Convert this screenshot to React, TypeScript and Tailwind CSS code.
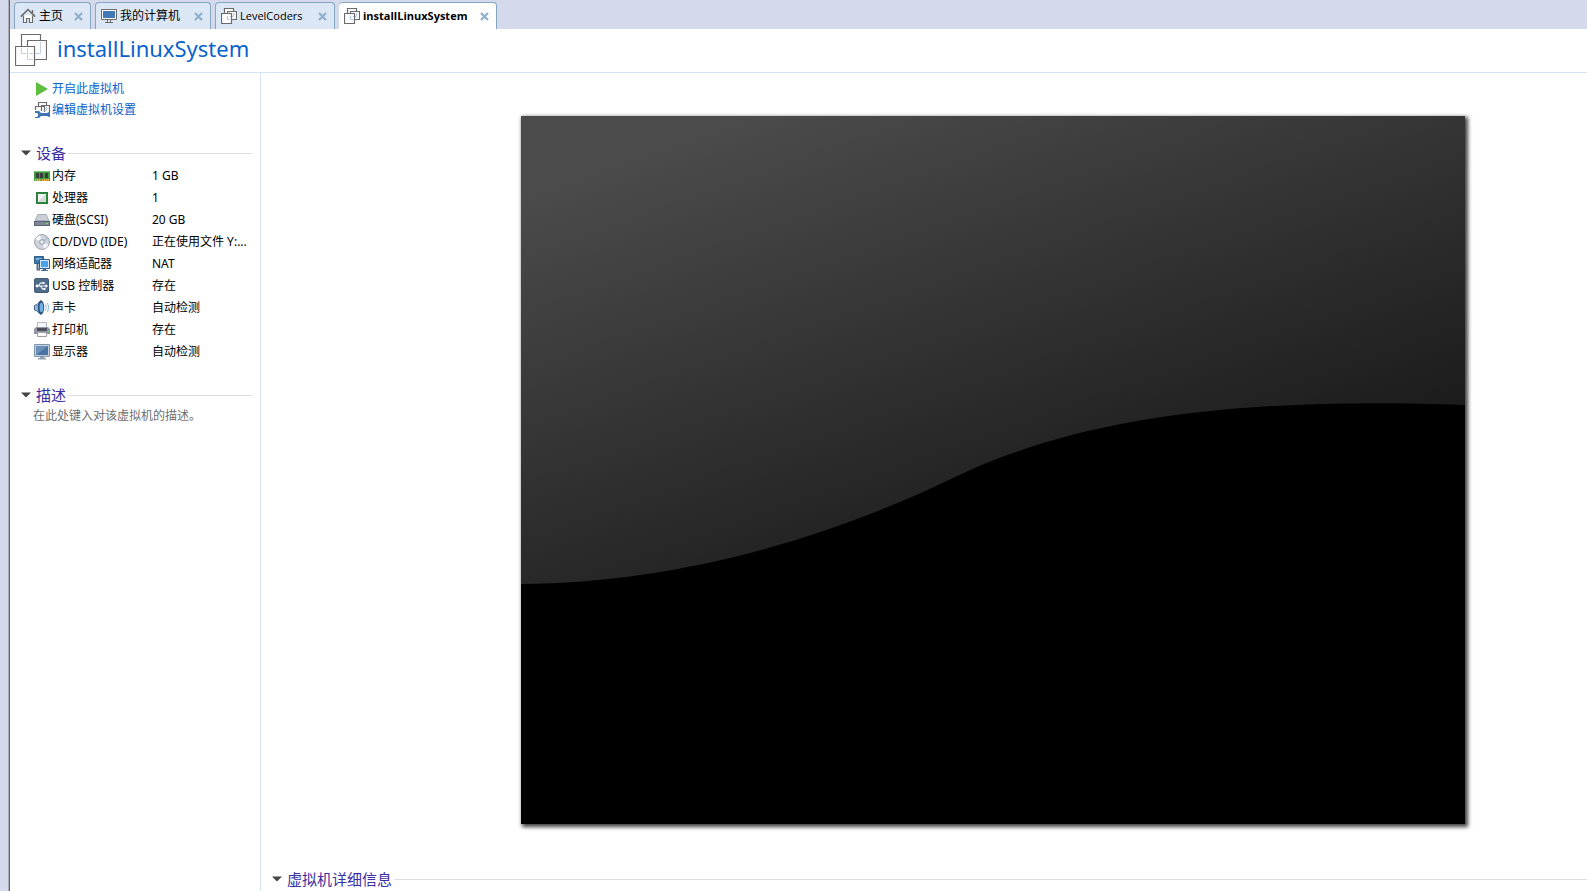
import { useState, type ReactNode } from 'react'

function HomeIcon() {
  return (
    <svg width="16" height="16" viewBox="0 0 16 16" className="shrink-0" aria-hidden="true">
      <path
        d="M3.5 7.5V14.5H6.5V10.5H9.5V14.5H12.5V7.5"
        fill="#fff"
        stroke="#6b6b6b"
        strokeWidth="1.2"
      />
      <path d="M.8 8.6 8 1.5l7.2 7.1" fill="none" stroke="#6b6b6b" strokeWidth="1.6" />
      <path d="M12.5 2v3.5" stroke="#6b6b6b" strokeWidth="1.4" />
    </svg>
  )
}

function ComputerIcon() {
  return (
    <svg width="16" height="16" viewBox="0 0 16 16" className="shrink-0" aria-hidden="true">
      <path d="M.5 1.5h15v10H.5z" fill="#fff" stroke="#6b6b6b" />
      <path d="M2 3h12v7H2z" fill="#4178b5" />
      <path d="M6.5 12v2.5M9.5 12v2.5M4 14.5h8" stroke="#6b6b6b" fill="none" />
    </svg>
  )
}

function VmIcon() {
  return (
    <svg width="16" height="16" viewBox="0 0 16 16" className="shrink-0" aria-hidden="true">
      <path d="M3.5.5h9v3h3v8h-5v4h-10v-9h3z" fill="#fff" />
      <path d="M6.5 8v3.5H9M9 8.5h3.5V5" stroke="#b9c8e4" fill="none" />
      <path
        d="M3.5 5V.5h9V3M6.5 5V3.5h9v8H11M.5 5.5h10v10H.5z"
        stroke="#6b6b6b"
        strokeWidth="1.2"
        fill="none"
      />
    </svg>
  )
}

function VmLargeIcon() {
  return (
    <svg width="32" height="32" viewBox="0 0 32 32" className="shrink-0" aria-hidden="true">
      <path
        d="M6.5 12V.5h19v6M12.5 12V6.5h19v19H20M.5 12.5h19v19H.5z"
        stroke="#6b6b6b"
        strokeWidth="1.2"
        fill="none"
      />
      <path
        d="M6.5 14v5.5h5M12.5 14v11.5H18M20 19.5h5.5V8M14 19.5h4"
        stroke="#c3d0e8"
        fill="none"
      />
    </svg>
  )
}

function PlayIcon() {
  return (
    <svg width="16" height="16" viewBox="0 0 16 16" className="shrink-0" aria-hidden="true">
      <path d="M2 1v14l12-7z" fill="#5fbe3f" />
    </svg>
  )
}

function SettingsIcon() {
  return (
    <svg width="16" height="16" viewBox="0 0 16 16" className="shrink-0" aria-hidden="true">
      <path
        d="M4.5 4V.5h8V3M7.5 9V3.5h8v8M1.5 8V4.5h9V10"
        stroke="#6b6b6b"
        strokeWidth="1.2"
        fill="none"
      />
      <path d="M9 8.5h3.5V5" stroke="#b9c8e4" fill="none" />
      <path
        d="M1 9h4l2 2h6l2-1h1v5h-1l-2-1H7l-2 2H1v-1h2l1-1v-2l-1-1H1z"
        fill="#3f76b4"
      />
    </svg>
  )
}

function MemoryIcon() {
  return (
    <svg width="16" height="16" viewBox="0 0 16 16" className="shrink-0" aria-hidden="true">
      <path d="M0 3h16v10H0z" fill="#3c9a3f" />
      <path d="M0 3h16v1H0z" fill="#7cc47a" />
      <path d="M2 5h3v5H2zM6 5h3v5H6zM11 5h3v5h-3z" fill="#3b3b3b" />
      <path d="M1 12h6M8 12h7" stroke="#e8b04a" strokeWidth="2" strokeDasharray="1.5 .5" />
    </svg>
  )
}

function CpuIcon() {
  return (
    <svg width="16" height="16" viewBox="0 0 16 16" className="shrink-0" aria-hidden="true">
      <path d="M2 2h12v12H2z" fill="#27903f" />
      <path d="M2.5 2.5h11v11h-11z" fill="none" stroke="#2e7a40" />
      <path d="M4 4h8v8H4z" fill="#d5dad7" />
      <path d="M4 4h8L4 12z" fill="#f3f5f3" />
    </svg>
  )
}

function DiskIcon() {
  return (
    <svg width="16" height="16" viewBox="0 0 16 16" className="shrink-0" aria-hidden="true">
      <path d="M3.5 2h9L16 10H0z" fill="#a9b0bc" />
      <path d="M4 3h8l2 5H2z" fill="#c9ced7" />
      <path d="M0 9h16v5H0z" fill="#5b6575" />
      <path d="M1 10h14v3H1z" fill="#7d8796" />
      <path d="M12 11h2v1h-2z" fill="#7ed957" />
    </svg>
  )
}

function DiscIcon() {
  return (
    <svg width="16" height="16" viewBox="0 0 16 16" className="shrink-0" aria-hidden="true">
      <circle cx="8" cy="8" r="7.4" fill="#d0d5dd" stroke="#969eab" strokeWidth="1" />
      <path d="M8 8 1.5 5A7 7 0 0 1 6 1.200zM8 8l6.5 3a7 7 0 0 1-4.5 3.800z" fill="#f6f8fa" />
      <path d="M8 8 12 2.200A7 7 0 0 1 14.800 6z" fill="#bcc4cf" />
      <circle cx="8" cy="8" r="2.6" fill="#c4ccd8" stroke="#98a3b3" strokeWidth=".8" />
      <circle cx="8" cy="8" r="1.1" fill="#fff" />
    </svg>
  )
}

function NetworkIcon() {
  return (
    <svg width="16" height="16" viewBox="0 0 16 16" className="shrink-0" aria-hidden="true">
      <path d="M.5.5h9v7h-9z" fill="#3f78ad" stroke="#2f5d8c" />
      <path d="M2 2h6v2H2z" fill="#7fb1dc" />
      <path d="M3.5 8v5.500H6" stroke="#5b6f86" strokeWidth="2" fill="none" />
      <path d="M5.5 3.5h10v9h-10z" fill="#d9e8f5" stroke="#2f5d8c" />
      <path d="M7 5h7v6H7z" fill="#48a4ea" />
      <path d="M9 13h3v1h2v1H7v-1h2z" fill="#486c92" />
    </svg>
  )
}

function UsbIcon() {
  return (
    <svg width="16" height="16" viewBox="0 0 16 16" className="shrink-0" aria-hidden="true">
      <rect x=".5" y=".5" width="14" height="14" rx="1.5" fill="#4f6b88" stroke="#405a77" />
      <path
        d="M2 8h10M4.500 8l2-3H9M6.500 8l2 3H10"
        stroke="#fff"
        strokeWidth="1.1"
        fill="none"
      />
      <circle cx="3" cy="8" r="1.4" fill="#fff" />
      <path d="m11.500 6 2.500 2-2.500 2zM8.500 4h2v2h-2zM9.500 10h2v2h-2z" fill="#fff" />
    </svg>
  )
}

function SoundIcon() {
  return (
    <svg width="16" height="16" viewBox="0 0 16 16" className="shrink-0" aria-hidden="true">
      <path d="M.5 5.500 3 4.500 7 .5v14L3 11l-2.500-1z" fill="#9bb9d8" stroke="#41658e" />
      <ellipse cx="7" cy="7.5" rx="3.2" ry="7" fill="#2a5585" />
      <ellipse cx="7.4" cy="7.5" rx="1.8" ry="4.8" fill="#6fb0e6" />
      <path d="M11.500 4.500q1.800 3 0 6M13.500 3q2.400 4.500 0 9" stroke="#8fb4d8" fill="none" />
    </svg>
  )
}

function PrinterIcon() {
  return (
    <svg width="16" height="16" viewBox="0 0 16 16" className="shrink-0" aria-hidden="true">
      <path d="M3.500.5h9v6h-9z" fill="#f5f6f8" stroke="#b4b9c1" />
      <path d="M2 5h12l2 2v5H0V7z" fill="#9297a4" />
      <path d="M3 6h10v3H3z" fill="#4b505c" />
      <path d="M13 9h2v1h-2z" fill="#6fd24d" />
      <path d="M3.500 10.500h9v4h-9z" fill="#fafafa" stroke="#9a9fa9" />
    </svg>
  )
}

function DisplayIcon() {
  return (
    <svg width="16" height="16" viewBox="0 0 16 16" className="shrink-0" aria-hidden="true">
      <path d="M.5.5h15v12H.5z" fill="#c3cfdd" stroke="#8295ab" />
      <path d="M2 2h12v9H2z" fill="#4a73a3" />
      <path d="M2 2h12L2 11z" fill="#6c91bb" />
      <path d="M6 13h4v1h2v1.500H4V14h2z" fill="#8fa0b4" />
    </svg>
  )
}

function CloseIcon() {
  return (
    <svg width="9" height="9" viewBox="0 0 9 9" aria-hidden="true">
      <path d="m1 1 7 7M8 1 1 8" stroke="#8fb0cc" strokeWidth="2.2" />
    </svg>
  )
}

const tabs = [
  { id: 'home', label: '主页', icon: <HomeIcon />, width: 'w-[77px]', text: 'text-xs' },
  { id: 'computer', label: '我的计算机', icon: <ComputerIcon />, width: 'w-[116px]', text: 'text-xs' },
  { id: 'level', label: 'LevelCoders', icon: <VmIcon />, width: 'w-[120px]', text: 'text-[11px]' },
  { id: 'install', label: 'installLinuxSystem', icon: <VmIcon />, width: 'w-[158px]', text: 'text-[11px]' },
]

const devices = [
  { name: '内存', value: '1 GB', icon: <MemoryIcon /> },
  { name: '处理器', value: '1', icon: <CpuIcon /> },
  { name: '硬盘(SCSI)', value: '20 GB', icon: <DiskIcon /> },
  { name: 'CD/DVD (IDE)', value: '正在使用文件 Y:...', icon: <DiscIcon /> },
  { name: '网络适配器', value: 'NAT', icon: <NetworkIcon /> },
  { name: 'USB 控制器', value: '存在', icon: <UsbIcon /> },
  { name: '声卡', value: '自动检测', icon: <SoundIcon /> },
  { name: '打印机', value: '存在', icon: <PrinterIcon /> },
  { name: '显示器', value: '自动检测', icon: <DisplayIcon /> },
]

function Section({ title, children }: { title: string; children?: ReactNode }) {
  const [open, setOpen] = useState(true)

  return (
    <section>
      <h2>
        <button
          type="button"
          aria-expanded={open}
          onClick={() => setOpen(!open)}
          className="flex h-6 w-full items-center text-[15px] leading-6 text-[#3a2fa3]"
        >
          <svg width="10" height="6" viewBox="0 0 10 6" aria-hidden="true">
            <path d="M0 .5h10L5 5.500z" fill="#444" />
          </svg>
          <span className="ml-[5px]">{title}</span>
          <span className="ml-[2px] h-px flex-1 bg-[#dedede]" />
        </button>
      </h2>
      {open && children}
    </section>
  )
}

function Screen() {
  return (
    <svg
      viewBox="0 0 944 708"
      className="block w-full shadow-[2px_2px_4px_1px_rgba(0,0,0,0.75)]"
      role="img"
      aria-label="installLinuxSystem"
    >
      <defs>
        <linearGradient id="gloss" gradientUnits="userSpaceOnUse" x1="25" y1="60" x2="195" y2="545">
          <stop offset="0" stopColor="#4c4c4c" />
          <stop offset="1" stopColor="#1c1c1c" />
        </linearGradient>
      </defs>
      <path d="M0 0h944v708H0z" fill="#000" />
      <path
        d="M0 0H944V289C720 281 560 301 434 361C300 426 150 467 0 468z"
        fill="url(#gloss)"
      />
    </svg>
  )
}

export default function App() {
  const [active, setActive] = useState('install')

  return (
    <div className="flex h-screen overflow-hidden bg-[#d4d9ec] pl-2 font-['Noto_Sans','Noto_Sans_CJK_SC',sans-serif] text-xs text-black">
      <div className="w-px shrink-0 bg-[#a9adba]" />
      <div className="w-px shrink-0 bg-[#666]" />
      <div className="flex min-w-0 flex-1 flex-col">
        <nav className="flex h-[29px] shrink-0 gap-1 pt-[2px] pl-1">
          {tabs.map((tab) => (
            <div
              key={tab.id}
              className={`flex items-center rounded-t-[4px] pr-[7px] pl-[5px] ${tab.width} ${
                tab.id === active
                  ? 'border-t border-r border-[#86a5c0] bg-white font-bold'
                  : 'border-x border-t border-[#86a5c0] bg-[#dbe7f5]'
              }`}
            >
              <button
                type="button"
                onClick={() => setActive(tab.id)}
                className={`flex flex-1 items-center gap-[3px] whitespace-nowrap font-['Open_Sans','Noto_Sans_CJK_SC',sans-serif] ${tab.text}`}
              >
                {tab.icon}
                {tab.label}
              </button>
              <button type="button" aria-label="关闭">
                <CloseIcon />
              </button>
            </div>
          ))}
        </nav>

        <header className="flex h-11 shrink-0 items-start gap-[10px] border-b border-[#d3e3f5] bg-white pt-[5px] pl-[5px]">
          <VmLargeIcon />
          <h1 className="text-[22px] leading-7 text-[#0a62cc]">installLinuxSystem</h1>
        </header>

        <div className="flex min-h-0 flex-1 bg-white">
          <aside className="w-[251px] shrink-0 border-r border-[#d3e3f5] pt-[5px] pr-2 pl-[11px]">
            <div className="flex flex-col items-start pl-[13px] text-[#0a62cc]">
              <button type="button" className="flex h-[21px] items-center gap-[2px]">
                <PlayIcon />
                开启此虚拟机
              </button>
              <button type="button" className="flex h-[21px] items-center gap-[2px]">
                <SettingsIcon />
                编辑虚拟机设置
              </button>
            </div>

            <div className="mt-[21px] flex flex-col gap-5">
              <Section title="设备">
                <table className="w-full table-fixed">
                  <tbody>
                    {devices.map((device) => (
                      <tr key={device.name} className="h-[22px]">
                        <th scope="row" className="w-[131px] p-0 pl-[13px] text-left font-normal">
                          <span className="flex items-center gap-[2px] whitespace-nowrap">
                            {device.icon}
                            {device.name}
                          </span>
                        </th>
                        <td className="p-0 whitespace-nowrap">{device.value}</td>
                      </tr>
                    ))}
                  </tbody>
                </table>
              </Section>

              <Section title="描述">
                <button type="button" className="block pl-3 leading-[18px] text-[#6e6e6e]">
                  在此处键入对该虚拟机的描述。
                </button>
              </Section>
            </div>
          </aside>

          <main className="flex min-w-0 flex-1 flex-col pt-[43px]">
            <div className="pr-[122px] pl-[260px]">
              <Screen />
            </div>
            <div className="mt-[43px] pl-[11px]">
              <Section title="虚拟机详细信息" />
            </div>
          </main>
        </div>
      </div>
    </div>
  )
}
